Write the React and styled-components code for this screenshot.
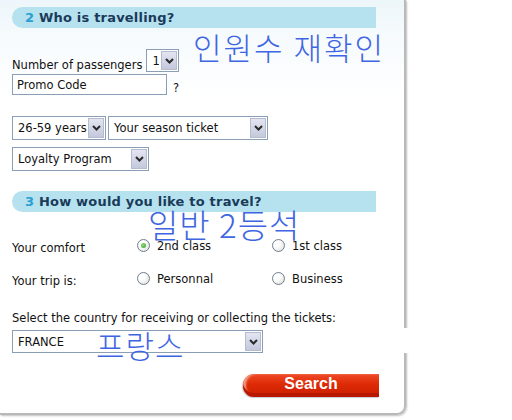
import React from 'react'
import styled, { createGlobalStyle } from 'styled-components'

const GlobalStyle = createGlobalStyle`
  html, body {
    margin: 0;
    padding: 0;
    background: #fff;
  }
  body {
    font-family: "DejaVu Sans", sans-serif;
    font-size: 11.5px;
    color: #111;
  }
`

const Page = styled.div`
  position: relative;
  width: 512px;
  height: 420px;
  overflow: hidden;
`

const Panel = styled.div`
  position: relative;
  box-sizing: border-box;
  width: 406px;
  height: 415px;
  padding: 7px 0 0 12px;
  display: flex;
  flex-direction: column;
  align-items: flex-start;
  background: linear-gradient(#edf6fa 0px, #f7fbfd 40px, #ffffff 100px);
  border-right: 2px solid #b9b9b9;
  border-bottom: 2px solid #b9b9b9;
  border-bottom-right-radius: 9px;
  box-shadow: 1px 1px 2px rgba(0, 0, 0, 0.25);
`

const SectionBar = styled.h2`
  box-sizing: border-box;
  margin: ${p => p.$top || 0}px 0 0 0;
  width: 364px;
  height: 21px;
  padding-left: 13px;
  line-height: 21px;
  background: #b5e2ee;
  border-radius: 11px 0 0 11px;
  font-family: "DejaVu Sans", sans-serif;
  font-weight: bold;
  font-size: 13px;
  letter-spacing: 0.2px;
  color: #1b3a5a;
`

const Step = styled.span`
  color: #2b9ed2;
`

const Row = styled.div`
  display: flex;
  align-items: ${p => p.$align || 'center'};
  gap: ${p => p.$gap || 0}px;
  margin-top: ${p => p.$top || 0}px;
`

const Label = styled.span`
  white-space: nowrap;
`

const SelectBox = styled.div`
  box-sizing: border-box;
  display: flex;
  align-items: stretch;
  width: ${p => p.$w}px;
  height: ${p => p.$h || 24}px;
  padding: 1px;
  border: 1px solid #8a9fb5;
  background: #fff;
`

const SelectValue = styled.span`
  flex: 1;
  display: flex;
  align-items: center;
  padding-left: 4px;
  color: #111;
  white-space: nowrap;
  overflow: hidden;
`

const ArrowButton = styled.span`
  box-sizing: border-box;
  width: 16px;
  display: flex;
  align-items: center;
  justify-content: center;
  border: 1px solid #b7bccc;
  background: linear-gradient(#e3e5f2, #c4c8dc);
`

const TextInput = styled.div`
  box-sizing: border-box;
  width: 155px;
  height: 21px;
  padding-left: 4px;
  display: flex;
  align-items: center;
  border: 1px solid #8a9fb5;
  background: #fff;
`

const Hint = styled.span`
  margin-top: 6px;
`

const Choices = styled.div`
  display: grid;
  grid-template-columns: 125px 135px 120px;
  grid-auto-rows: 33px;
  margin-top: 17px;
  align-items: center;
`

const ChoiceLabel = styled.span`
  padding-top: 4px;
`

const Option = styled.label`
  display: flex;
  align-items: center;
  gap: 7px;
`

const Radio = styled.span`
  position: relative;
  box-sizing: border-box;
  width: 13px;
  height: 13px;
  border-radius: 50%;
  border: 1px solid #6f7f8f;
  background: radial-gradient(circle at 35% 35%, #ffffff 30%, #d8d8d4 100%);
  &::after {
    content: '';
    display: ${p => (p.$checked ? 'block' : 'none')};
    position: absolute;
    left: 3px;
    top: 3px;
    width: 5px;
    height: 5px;
    border-radius: 50%;
    background: radial-gradient(circle at 40% 40%, #8fdc7a, #2f9a2a);
  }
`

const Note = styled.p`
  margin: 16px 0 0 0;
`

const SearchButton = styled.button`
  margin: 21px 0 0 231px;
  width: 136px;
  height: 23px;
  padding: 0 0 3px 0;
  border: none;
  border-radius: 11px 0 0 11px;
  background: linear-gradient(#ef4a28 0%, #de2a06 45%, #c81e00 100%);
  box-shadow: inset 0 -4px 0 #b81800, inset 3px 0 2px #f59a80, -1px 1px 1px #c8ccd6;
  color: #fff;
  font-family: "Liberation Sans", Arial, sans-serif;
  font-weight: bold;
  font-size: 16px;
  cursor: pointer;
`

const Handwritten = styled.span`
  position: absolute;
  left: ${p => p.$x}px;
  top: ${p => p.$y}px;
  font-family: "Noto Sans CJK KR", sans-serif;
  font-weight: 300;
  font-size: ${p => p.$size}px;
  letter-spacing: ${p => p.$spacing || 0}px;
  line-height: 1;
  color: #3f66e2;
  white-space: pre;
  pointer-events: none;
`

const BorderGap = styled.div`
  position: absolute;
  left: 401px;
  top: 328px;
  width: 24px;
  height: 25px;
  background: #fff;
`

const Chevron = () => (
  <svg width="9" height="6" viewBox="0 0 9 6">
    <polyline points="1,1 4.5,4.5 8,1" fill="none" stroke="#2a2a2a" strokeWidth="2" />
  </svg>
)

const Select = ({ value, w, h }) => (
  <SelectBox $w={w} $h={h}>
    <SelectValue>{value}</SelectValue>
    <ArrowButton>
      <Chevron />
    </ArrowButton>
  </SelectBox>
)

export default function App() {
  return (
    <Page>
      <GlobalStyle />
      <Panel>
        <SectionBar>
          <Step>2</Step> Who is travelling?
        </SectionBar>

        <Row $top={21} $gap={4} $align="flex-end">
          <Label>Number of passengers</Label>
          <Select value="1" w={33} h={23} />
        </Row>
        <Row $top={2} $gap={6} $align="center">
          <TextInput>Promo Code</TextInput>
          <Hint>?</Hint>
        </Row>

        <Row $top={21} $gap={2}>
          <Select value="26-59 years" w={94} />
          <Select value="Your season ticket" w={160} />
        </Row>
        <Row $top={7}>
          <Select value="Loyalty Program" w={137} />
        </Row>

        <SectionBar $top={20}>
          <Step>3</Step> How would you like to travel?
        </SectionBar>

        <Choices>
          <ChoiceLabel>Your comfort</ChoiceLabel>
          <Option>
            <Radio $checked />2nd class
          </Option>
          <Option>
            <Radio />1st class
          </Option>
          <ChoiceLabel>Your trip is:</ChoiceLabel>
          <Option>
            <Radio />Personnal
          </Option>
          <Option>
            <Radio />Business
          </Option>
        </Choices>

        <Note>Select the country for receiving or collecting the tickets:</Note>
        <Row $top={5}>
          <Select value="FRANCE" w={251} h={23} />
        </Row>

        <SearchButton>Search</SearchButton>

        <Handwritten $x={193} $y={31} $size={31} $spacing={2}>인원수 재확인</Handwritten>
        <Handwritten $x={148} $y={208} $size={33} $spacing={1}>일반 2등석</Handwritten>
        <Handwritten $x={96} $y={329} $size={31} $spacing={1}>프랑스</Handwritten>
      </Panel>
      <BorderGap />
    </Page>
  )
}
